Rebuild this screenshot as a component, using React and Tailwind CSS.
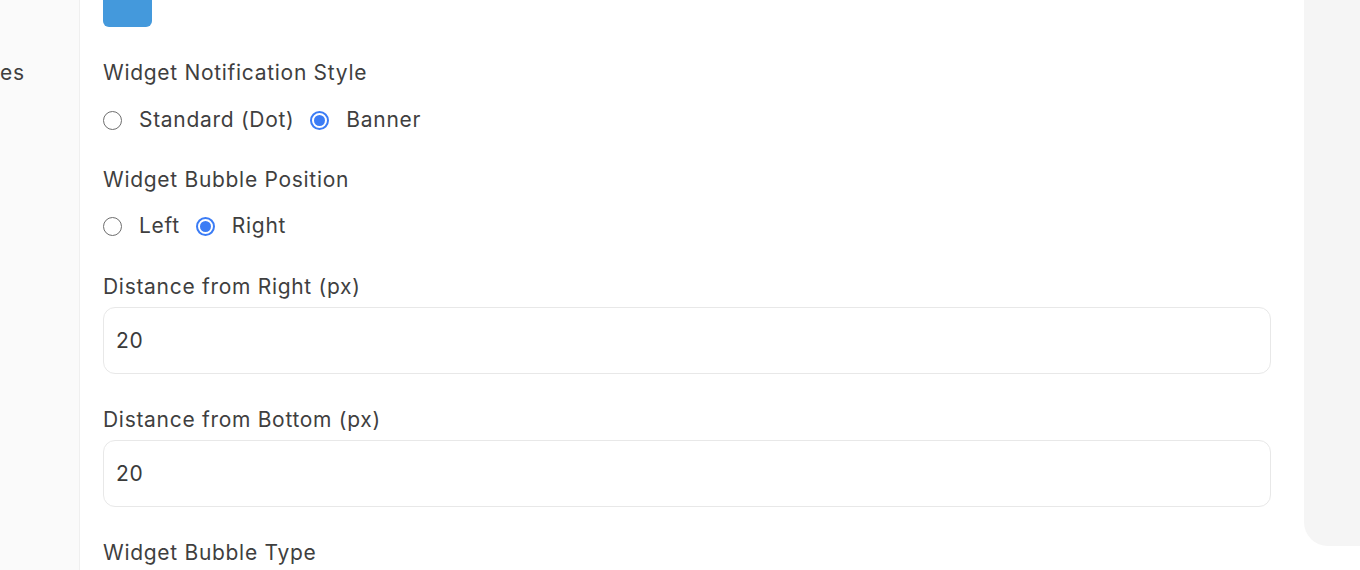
import React, { useState } from "react";

const Radio = ({ checked, label, onClick }) => (
  <label className="flex items-center gap-[17px] cursor-pointer" onClick={onClick}>
    {checked ? (
      <span className="w-[19px] h-[19px] rounded-full border-2 border-[#3b7cf5] flex items-center justify-center">
        <span className="w-[11px] h-[11px] rounded-full bg-[#3b7cf5]"></span>
      </span>
    ) : (
      <span className="w-[19px] h-[19px] rounded-full border-[1.5px] border-[#6e6e6e] bg-white"></span>
    )}
    <span>{label}</span>
  </label>
);

const Field = ({ label, value }) => (
  <div className="mb-[32px]">
    <div className="h-[28px] leading-[28px]">{label}</div>
    <input
      className="mt-[6px] w-full h-[67px] px-[12px] rounded-[12px] border border-[#e8e8e8] bg-white text-[#3a3a3a] outline-none"
      defaultValue={value}
    />
  </div>
);

export default function App() {
  const [style, setStyle] = useState("banner");
  const [position, setPosition] = useState("right");

  return (
    <div
      className="flex w-full h-[570px] overflow-hidden bg-white text-[21px] tracking-[0.7px] text-[#3f3f3f]"
      style={{ fontFamily: "Inter, 'Noto Sans', sans-serif" }}
    >
      {/* sidebar, cut off on the left */}
      <div className="w-[80px] shrink-0 bg-[#fafafa] border-r border-[#efefef] overflow-hidden">
        <div className="mt-[59px] h-[28px] leading-[28px] whitespace-nowrap">es</div>
      </div>

      {/* settings */}
      <div className="flex-1 pl-[23px] pr-[33px]">
        <div className="w-[49px] h-[48px] -mt-[21px] rounded-[6px] bg-[#4499dc]"></div>

        <div className="mt-[32px] h-[28px] leading-[28px]">Widget Notification Style</div>
        <div className="mt-[19px] mb-[32px] h-[28px] flex items-center gap-[16px]">
          <Radio checked={style === "dot"} label="Standard (Dot)" onClick={() => setStyle("dot")} />
          <Radio checked={style === "banner"} label="Banner" onClick={() => setStyle("banner")} />
        </div>

        <div className="h-[28px] leading-[28px]">Widget Bubble Position</div>
        <div className="mt-[18px] mb-[33px] h-[28px] flex items-center gap-[16px]">
          <Radio checked={position === "left"} label="Left" onClick={() => setPosition("left")} />
          <Radio checked={position === "right"} label="Right" onClick={() => setPosition("right")} />
        </div>

        <Field label="Distance from Right (px)" value="20" />
        <Field label="Distance from Bottom (px)" value="20" />

        <div className="h-[28px] leading-[28px]">Widget Bubble Type</div>
      </div>

      {/* right rail */}
      <div className="w-[56px] shrink-0 h-[546px] bg-[#f5f5f5] rounded-bl-[24px]"></div>
    </div>
  );
}
